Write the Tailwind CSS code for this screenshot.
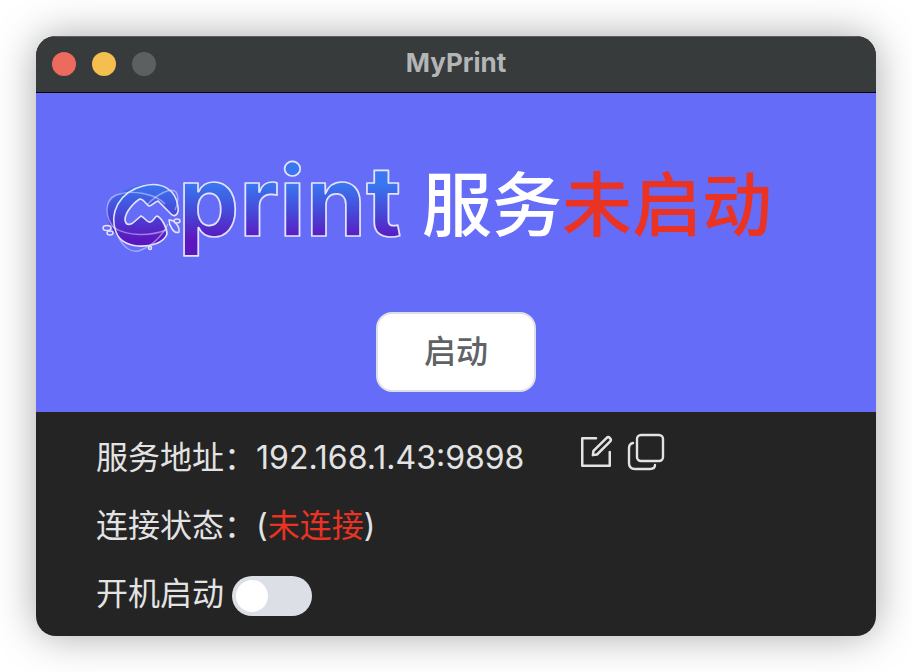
<!DOCTYPE html>
<html lang="zh-CN">
<head>
    <meta charset="UTF-8">
    <meta name="viewport" content="width=device-width, initial-scale=1">
    <title>MyPrint</title>
    <script src="https://cdn.jsdelivr.net/npm/@tailwindcss/browser@4"></script>
</head>
<body class="bg-white p-9 font-[Inter,'Noto_Sans_CJK_SC',sans-serif]">
    <!-- Window -->
    <div class="overflow-hidden rounded-[20px] bg-[#242424] shadow-[0_0_40px_rgba(0,0,0,0.34)]">
      <!-- Title bar -->
      <header class="grid h-[57px] grid-cols-3 items-center border-b border-black bg-[#383b3b] px-4 inset-shadow-[0_1px_0_#5c5f5f]">
        <div class="flex gap-4">
          <button type="button" aria-label="关闭" class="size-6 rounded-full bg-[#ed6a5e]"></button>
          <button type="button" aria-label="最小化" class="size-6 rounded-full bg-[#f5bf4f]"></button>
          <button type="button" aria-label="缩放" disabled class="size-6 rounded-full bg-[#5d6060]"></button>
        </div>
        <h1 class="pb-0.5 text-center text-[26px] leading-8 font-bold text-[#b2b6b6]">MyPrint</h1>
      </header>

      <!-- Service status -->
      <main class="bg-[#656cf7] pt-[57px] pb-5">
        <div class="flex items-center gap-3.5 pl-16">
          <svg class="h-[112px] w-[308px] shrink-0 overflow-visible" viewBox="100 150 308 112" role="img" aria-label="print">
            <defs>
              <linearGradient id="ink" gradientUnits="userSpaceOnUse" x1="0" y1="184" x2="0" y2="240">
                <stop offset="0" stop-color="#3a76f0"/>
                <stop offset="0.5" stop-color="#4649d8"/>
                <stop offset="1" stop-color="#5c16bd"/>
              </linearGradient>
            </defs>
            <!-- globe -->
            <path d="M113 230C103 216 105 201 119 195C129 187 143 183 156 184C170 185 178 196 178 210C178 215 173 217 170 213L158 201C154 203 152 206 149 206C146 205 144 199 140 199C136 201 125 211 125 221C127 226 131 225 134 222L142 216C145 218 147 222 149 222C153 223 154 217 157 216C162 218 167 228 167 234C164 243 150 247 138 246C126 245 118 239 113 230Z" fill="url(#ink)"/>
            <g fill="none" stroke="#e4e3ff">
              <path stroke-width="1.6" d="M116 232C109 213 119 192 143 186C161 181 176 189 178 207C179 214 175 218 171 214L158 201C154 202 152 206 149 206C146 205 144 199 140 199C136 201 125 211 125 220C126 226 131 225 134 222L141 216C145 218 147 222 149 222C153 223 154 217 157 216C162 218 167 228 167 234C164 243 150 247 138 246C127 245 119 240 116 232Z"/>
              <g stroke-width="1.4" stroke-opacity="0.5">
                <path d="M116 230C104 218 104 200 116 195C132 189 156 194 165 204"/>
                <path d="M113 227C128 237 151 236 166 230"/>
                <path d="M147 205C157 194 171 187 176 192C179 196 178 204 175 210"/>
                <path d="M118 236C123 248 133 254 141 250C154 245 164 233 168 224"/>
              </g>
              <g stroke-width="1.5" fill="#656cf7">
                <ellipse cx="107" cy="228" rx="4" ry="2.5"/>
                <ellipse cx="110" cy="233" rx="3" ry="2"/>
                <ellipse cx="177" cy="221" rx="3" ry="2"/>
                <path d="M169 220C174 219 180 227 179 232C174 235 169 225 169 220Z"/>
                <circle cx="150" cy="248" r="1.5"/>
              </g>
            </g>
            <text x="178" y="236" font-family="Inter, sans-serif" font-size="97" font-weight="700" fill="url(#ink)" stroke="#e4e3ff" stroke-width="1.7" stroke-linejoin="round">print</text>
          </svg>
          <h2 class="text-[70px] leading-24 font-medium whitespace-nowrap text-white">服务<span class="text-[#eb3323]">未启动</span></h2>
        </div>
        <button type="button" class="mx-auto mt-[50px] block h-20 w-40 rounded-2xl border-2 border-[#dcdfe6] bg-white text-[32px] leading-10 font-medium text-[#606266]">启动</button>
      </main>

      <!-- Settings -->
      <section class="pt-3 pb-2 pl-[60px] text-[32px] leading-10 text-[#e3e3e3]">
        <div class="flex h-17 items-center">
          <span>服务地址：</span>
          <span>192.168.1.43:9898</span>
          <div class="mb-3 ml-13 flex gap-2.5">
            <button type="button" aria-label="编辑" class="size-10">
              <svg class="size-10" viewBox="0 0 1024 1024" fill="currentColor">
                <path d="M832 512a32 32 0 1 1 64 0v352a32 32 0 0 1-32 32H160a32 32 0 0 1-32-32V160a32 32 0 0 1 32-32h352a32 32 0 0 1 0 64H192v640h640z"/>
                <path d="m469.952 554.24 52.8-7.552L847.104 222.4a32 32 0 1 0-45.248-45.248L477.44 501.44l-7.552 52.8zm422.4-422.4a96 96 0 0 1 0 135.808l-331.84 331.84a32 32 0 0 1-18.112 9.088L436.8 623.68a32 32 0 0 1-36.224-36.224l15.104-105.6a32 32 0 0 1 9.024-18.112l331.904-331.84a96 96 0 0 1 135.744 0z"/>
              </svg>
            </button>
            <button type="button" aria-label="复制" class="size-10">
              <svg class="size-10" viewBox="0 0 40 40" fill="none" stroke="currentColor" stroke-width="2.4" stroke-linecap="round">
                <rect x="11" y="3" width="26" height="26" rx="4"/>
                <path d="M7 11Q3 12 3 16V31Q3 37 9 37H24Q29 37 29 33"/>
              </svg>
            </button>
          </div>
        </div>
        <div class="flex h-17 items-center">
          <span>连接状态：</span>
          <span>(<span class="text-[#eb3323]">未连接</span>)</span>
        </div>
        <div class="flex h-17 items-center gap-2">
          <label for="autostart">开机启动</label>
          <input type="checkbox" role="switch" id="autostart" class="mt-1 flex h-10 w-20 appearance-none items-center rounded-full bg-[#dcdfe6] px-1 before:size-8 before:rounded-full before:bg-white checked:justify-end checked:bg-[#656cf7]">
        </div>
      </section>
    </div>
</body>
</html>
